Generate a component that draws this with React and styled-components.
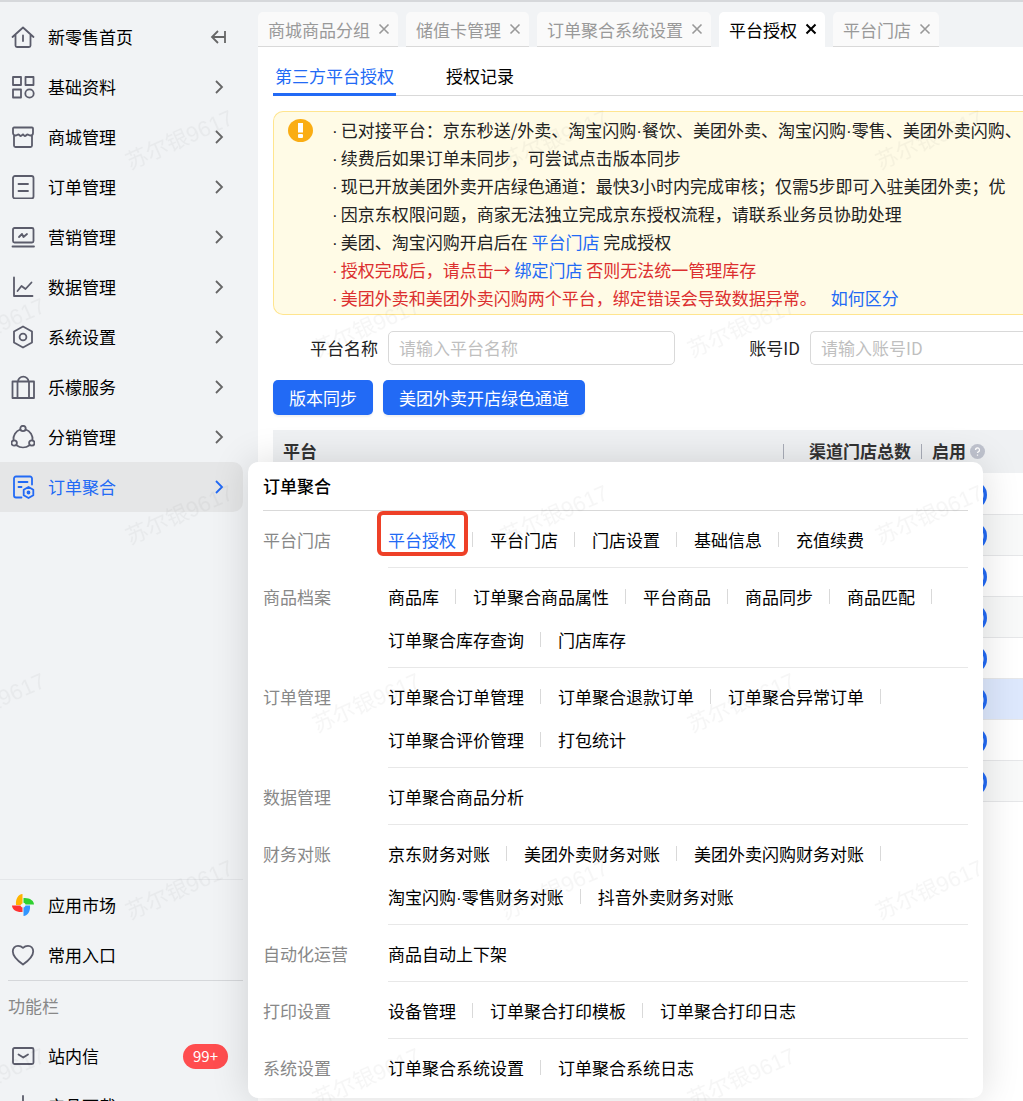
import React, { useState } from "react";
import styled, { createGlobalStyle, css } from "styled-components";

const GlobalStyle = createGlobalStyle`
  * {
    box-sizing: border-box;
  }
  body {
    margin: 0;
    background: #fff;
    font-family: "Noto Sans CJK SC", "Noto Sans", sans-serif;
    font-size: 17px;
    color: #222;
  }
  button, input {
    font: inherit;
  }
  a {
    text-decoration: none;
  }
`;

const Page = styled.div`
  position: relative;
  display: flex;
  height: 100vh;
  min-height: 700px;
  overflow: hidden;
  background: #f1f3f5;
  border-top: 2px solid #d6d8db;
`;

const Sidebar = styled.aside`
  flex: 0 0 243px;
  display: flex;
  flex-direction: column;
  margin-right: 15px;
`;
const MenuList = styled.nav`
  flex: 1;
  min-height: 0;
  overflow: hidden;
  padding-top: 10px;
`;
const MenuFooter = styled.nav`
  flex: 0 0 222px;
  overflow: hidden;
  border-top: 1px solid #e4e6e9;
`;
const MenuItem = styled.a`
  display: flex;
  align-items: center;
  height: 50px;
  padding: 0 15px 0 11px;
  border-radius: 0 10px 10px 0;
  color: ${(props) => (props.$active ? "#226af5" : "#000")};
  background: ${(props) => (props.$active ? "#e5e6e7" : "transparent")};
`;
const MenuIcon = styled.svg`
  width: 24px;
  height: 24px;
  margin-right: 13px;
  fill: none;
  stroke: ${(props) => (props.$active ? "#226af5" : "#5b5c6b")};
  stroke-width: 1.8;
  stroke-linecap: round;
  stroke-linejoin: round;
`;
const MenuText = styled.span`
  flex: 1;
  padding-bottom: 2px;
`;
const ArrowIcon = styled.svg`
  width: 18px;
  height: 18px;
  fill: none;
  stroke: ${(props) => (props.$active ? "#226af5" : "#666")};
  stroke-width: 1.8;
`;
const FooterLine = styled.div`
  height: 1px;
  margin-left: 8px;
  background: #d5d7da;
`;
const FooterTitle = styled.div`
  height: 50px;
  padding-left: 8px;
  line-height: 50px;
  color: #888;
`;
const Count = styled.span`
  height: 25px;
  padding: 0 10px;
  border-radius: 13px;
  background: #ff4d4f;
  color: #fff;
  font-size: 15px;
  line-height: 24px;
`;

const Main = styled.main`
  flex: 1;
  min-width: 0;
  display: flex;
  flex-direction: column;
`;
const TabBar = styled.div`
  display: flex;
  gap: 8px;
  padding-top: 10px;
`;
const Tab = styled.div`
  display: flex;
  align-items: center;
  gap: 8px;
  height: 35px;
  padding: 0 8px 0 10px;
  border-radius: 5px 5px 0 0;
  white-space: nowrap;
  background: #fafafa;
  border-bottom: 1px solid #d9d9d9;
  color: #999;
  ${(props) =>
    props.$active &&
    css`
      background: #fff;
      border-bottom-color: #fff;
      color: #000;
    `}
`;
const CloseButton = styled.button`
  display: flex;
  padding: 0;
  border: none;
  background: none;
  color: inherit;
  cursor: pointer;
  svg {
    width: 12px;
    height: 12px;
    fill: none;
    stroke: currentColor;
    stroke-width: ${(props) => (props.$active ? 2 : 1.6)};
  }
`;
const Content = styled.section`
  flex: 1;
  min-height: 0;
  padding-left: 15px;
  overflow: hidden;
  background: #fff;
`;
const SubTabs = styled.div`
  display: flex;
  gap: 48px;
  height: 49px;
  border-bottom: 1px solid #d9d9d9;
`;
const SubTab = styled.button`
  height: 49px;
  padding: 10px 2px 0;
  border: none;
  border-bottom: 3px solid ${(props) => (props.$active ? "#226af5" : "transparent")};
  background: none;
  color: ${(props) => (props.$active ? "#226af5" : "#000")};
  cursor: pointer;
`;

const Dot = styled.span`
  font-family: "Liberation Sans", sans-serif;
`;
const Notice = styled.div`
  display: flex;
  margin-top: 15px;
  padding: 4px 0 2px 14px;
  border: 1px solid #ffe58f;
  border-right: none;
  border-radius: 10px 0 0 10px;
  background: #fffbe6;
  overflow: hidden;
`;
const NoticeIcon = styled.svg`
  flex: none;
  width: 25px;
  height: 25px;
  margin: 2px 19px 0 0;
`;
const NoticeList = styled.ul`
  margin: 0;
  padding: 0;
  list-style: none;
`;
const NoticeLine = styled.li`
  height: 28px;
  line-height: 28px;
  white-space: nowrap;
  color: ${(props) => (props.$danger ? "#dc2f2f" : "#222")};
  &::before {
    content: "·";
    margin-right: 3px;
    font-family: "Liberation Sans", sans-serif;
  }
`;
const Link = styled.a`
  color: #226af5;
`;
const SpacedLink = styled(Link)`
  margin-left: 14px;
`;

const SearchForm = styled.form`
  display: flex;
  align-items: center;
  gap: 10px;
  margin-top: 16px;
`;
const Label = styled.label`
  width: ${(props) => props.$width}px;
  padding-bottom: 2px;
  text-align: right;
  white-space: nowrap;
`;
const TextInput = styled.input`
  width: 287px;
  height: 34px;
  padding: 0 10px 2px;
  border: 1px solid #d9d9d9;
  border-radius: 5px;
  background: #fff;
  &::placeholder {
    color: #bfbfbf;
  }
`;
const WideInput = styled(TextInput)`
  flex: 1;
  min-width: 0;
  border-right: none;
  border-radius: 5px 0 0 5px;
`;
const ButtonRow = styled.div`
  display: flex;
  gap: 10px;
  margin-top: 15px;
`;
const PrimaryButton = styled.button`
  height: 35px;
  padding: 0 16px;
  border: none;
  border-radius: 5px;
  background: #226af5;
  box-shadow: 0 2px 2px rgba(0, 0, 0, 0.06);
  color: #fff;
  cursor: pointer;
`;

const Table = styled.table`
  width: 100%;
  margin-top: 15px;
  border-collapse: collapse;
  table-layout: fixed;
`;
const HeadCell = styled.th`
  width: ${(props) => props.$width || "auto"};
  height: 43px;
  padding: 0 10px 2px;
  background: #eff1f3;
  color: #333;
  font-weight: 700;
  text-align: left;
  white-space: nowrap;
`;
const HeadInner = styled.div`
  display: flex;
  align-items: center;
  justify-content: ${(props) => (props.$end ? "flex-end" : "flex-start")};
  gap: 4px;
`;
const SplitHeadCell = styled(HeadCell)`
  padding-left: 11px;
  background: linear-gradient(#a9adb8, #a9adb8) 0 50% / 1px 15px no-repeat #eff1f3;
`;
const HelpIcon = styled.svg`
  width: 15px;
  height: 15px;
  margin-top: 2px;
`;
const Row = styled.tr`
  height: 41px;
  background: ${(props) => props.$color};
  td {
    padding: 3px 10px 0 11px;
    border-bottom: 1px solid #e6e7e9;
  }
`;
const Switch = styled.input`
  appearance: none;
  display: block;
  width: 55px;
  height: 28px;
  margin: 0;
  border-radius: 14px;
  background: radial-gradient(circle at 41px 14px, #fff 10px, #226af5 11px);
`;

const Popup = styled.div`
  position: absolute;
  top: 460px;
  left: 248px;
  right: 40px;
  padding: 0 15px 3px;
  border-radius: 10px;
  background: #fff;
  box-shadow: 0 0 38px rgba(0, 0, 0, 0.14);
`;
const PopupTitle = styled.h2`
  height: 49px;
  margin: 0;
  border-bottom: 1px solid #d9d9d9;
  color: #000;
  font-size: 17px;
  font-weight: 500;
  line-height: 48px;
`;
const Group = styled.div`
  display: grid;
  grid-template-columns: 125px 1fr;
`;
const GroupName = styled.div`
  padding-top: 16px;
  line-height: 26px;
  color: #888;
`;
const GroupLinks = styled.div`
  display: flex;
  flex-wrap: wrap;
  row-gap: 17px;
  padding: 15px 0;
  border-bottom: 1px solid #e8e8e8;
  ${Group}:last-child & {
    border-bottom: none;
  }
`;
const GroupLink = styled.a`
  position: relative;
  display: flex;
  align-items: center;
  height: 26px;
  color: ${(props) => (props.$current ? "#226af5" : "#000")};
  &:not(:last-child)::after {
    content: "";
    width: 1px;
    height: 15px;
    margin: 0 17px 0 16px;
    background: #d9d9d9;
  }
  ${(props) =>
    props.$current &&
    css`
      &::before {
        content: "";
        position: absolute;
        inset: -15px 22px -4px -11px;
        border: 4px solid #ee4027;
        border-radius: 6px;
      }
    `}
`;

const Watermark = styled.svg`
  position: absolute;
  inset: 0;
  width: 100%;
  height: 100%;
  pointer-events: none;
  text {
    font-family: "Liberation Sans", "Noto Sans CJK SC", sans-serif;
    font-size: 22px;
    fill: rgba(0, 0, 0, 0.035);
  }
`;

const icons = {
  home: (
    <path d="M1.5 12 12 2.5 22.5 12M4.5 10v10.500a1.500 1.500 0 0 0 1.500 1.500h12a1.500 1.500 0 0 0 1.500-1.500V10M12 10.500v5.500" />
  ),
  base: (
    <>
      <rect x="2" y="2" width="8" height="8" />
      <rect x="14.5" y="2" width="8" height="8" />
      <rect x="2" y="14.5" width="8" height="8" />
      <circle cx="18.5" cy="18.5" r="4.2" />
    </>
  ),
  shop: (
    <path d="M3 2.500h18a1 1 0 0 1 1 1V8c0 1.300-1 2.500-2.500 2.500-1.300 0-2-1-3-1s-1.500 1.500-2.500 1.500-1.200-1.500-2-1.500-1.200 1.500-2.200 1.500-1.500-1.500-2.500-1.500-1.500 1-2.800 1C3 10.500 2 9.300 2 8V3.500a1 1 0 0 1 1-1zM3 10.500v10a1.500 1.500 0 0 0 1.500 1.500h15a1.500 1.500 0 0 0 1.500-1.500v-10" />
  ),
  order: (
    <>
      <rect x="2" y="1" width="20.5" height="22.5" rx="2" />
      <path d="M7.500 9h9.500M7.500 16h9.500" />
    </>
  ),
  promo: (
    <>
      <rect x="2" y="3" width="20.5" height="14.5" rx="1.500" />
      <path d="M1.500 21.500h21.500M8 12l3-3 1.500 3 3.500-3" />
    </>
  ),
  data: <path d="M3 2.500v18.500h18.500M6.500 16l4-5 4 3 6-6.500" />,
  setting: (
    <>
      <path d="M12 1.500 21 6.500v11l-9 5-9-5v-11z" />
      <circle cx="12" cy="12" r="3.4" />
    </>
  ),
  service: <path d="M1.500 6.500h21.500V23H1.500zM6.500 6.500V23M18 6.500V23M7 6.500a5.200 4.800 0 0 1 10.500 0" />,
  share: (
    <>
      <circle cx="12" cy="3.5" r="2.7" />
      <circle cx="3.2" cy="18" r="2.7" />
      <circle cx="20.8" cy="18" r="2.7" />
      <path d="M9.300 4.500A10 10 0 0 0 2.500 15.300M14.700 4.500a10 10 0 0 1 6.800 10.800M5.500 20.300a11 11 0 0 0 13 0" />
    </>
  ),
  aggregate: (
    <>
      <path d="M21 9.500V3.500a2 2 0 0 0-2-2H5a2 2 0 0 0-2 2v17a2 2 0 0 0 2 2h5.500M7.500 7h9M7.500 12h3" />
      <path d="m17.500 12 4.800 2.800v5.400l-4.800 2.800-4.800-2.800v-5.400z" />
      <circle cx="17.5" cy="17.5" r="1" />
    </>
  ),
  market: (
    <g stroke="none">
      <path fill="#ffb400" d="M11.500 1v9.500c-1 .3-1.500 1-1.700 1.500H5C4.500 6 7 1.500 11.500 1z" />
      <path fill="#2fd12f" d="M12.500 5c6-.5 10.500 2.500 10.500 6.500h-8.500c-.3-1-1-1.500-2-1.700z" />
      <path fill="#ff3232" d="M1 12.500h8.500c.3 1 1 1.700 2 2V19C5.500 19.500 1 16.500 1 12.500z" />
      <path fill="#3396ff" d="M12.500 23v-8.500c1-.3 1.700-1 2-2H19c.5 6-2 10-6.500 10.500z" />
    </g>
  ),
  heart: (
    <path d="M12 21.500C7 18 1.800 14 1.800 8.500 1.800 5 4 2.800 7 2.800c2.200 0 4 1 5 2 1-1 2.800-2 5-2 3 0 5.200 2.200 5.200 5.700 0 5.500-5.200 9.500-10.200 13z" />
  ),
  mail: (
    <>
      <rect x="2" y="4" width="20.5" height="16" rx="1.500" />
      <path d="m7.500 10.500 4.800 3 4.700-3" />
    </>
  ),
  download: <path d="M12 2v14M6 11l6 6 6-6M2 21h20" />,
};

const menus = [
  { icon: "home", name: "新零售首页", home: true },
  { icon: "base", name: "基础资料" },
  { icon: "shop", name: "商城管理" },
  { icon: "order", name: "订单管理" },
  { icon: "promo", name: "营销管理" },
  { icon: "data", name: "数据管理" },
  { icon: "setting", name: "系统设置" },
  { icon: "service", name: "乐檬服务" },
  { icon: "share", name: "分销管理" },
  { icon: "aggregate", name: "订单聚合", active: true },
];

const tabs = ["商城商品分组", "储值卡管理", "订单聚合系统设置", "平台授权", "平台门店"];

const groups = [
  { name: "平台门店", links: ["平台授权", "平台门店", "门店设置", "基础信息", "充值续费"] },
  {
    name: "商品档案",
    links: ["商品库", "订单聚合商品属性", "平台商品", "商品同步", "商品匹配", "订单聚合库存查询", "门店库存"],
  },
  {
    name: "订单管理",
    links: ["订单聚合订单管理", "订单聚合退款订单", "订单聚合异常订单", "订单聚合评价管理", "打包统计"],
  },
  { name: "数据管理", links: ["订单聚合商品分析"] },
  {
    name: "财务对账",
    links: ["京东财务对账", "美团外卖财务对账", "美团外卖闪购财务对账", "淘宝闪购·零售财务对账", "抖音外卖财务对账"],
  },
  { name: "自动化运营", links: ["商品自动上下架"] },
  { name: "打印设置", links: ["设备管理", "订单聚合打印模板", "订单聚合打印日志"] },
  { name: "系统设置", links: ["订单聚合系统设置", "订单聚合系统日志"] },
];

const rowColors = ["#fff", "#f8f9f9", "#fff", "#f8f9f9", "#fff", "#dde8fd", "#fff", "#f8f9f9"];

// the CJK font draws "·" full width, so it gets a narrow one
function DotText({ text }) {
  return text.split("·").map((part, index) => (
    <React.Fragment key={index}>
      {index > 0 && <Dot>·</Dot>}
      {part}
    </React.Fragment>
  ));
}

function Menu({ icon, name, active, home, plain, count }) {
  return (
    <MenuItem href="#" $active={active}>
      <MenuIcon viewBox="0 0 24 24" $active={active}>
        {icons[icon]}
      </MenuIcon>
      <MenuText>{name}</MenuText>
      {count && <Count>{count}</Count>}
      {home && (
        <ArrowIcon viewBox="0 0 18 18">
          <path d="M8 3 2 9l6 6M2 9h13M15 3v12" />
        </ArrowIcon>
      )}
      {!home && !plain && (
        <ArrowIcon viewBox="0 0 18 18" $active={active}>
          <path d="m6 3 6 6-6 6" />
        </ArrowIcon>
      )}
    </MenuItem>
  );
}

function App() {
  const [current, setCurrent] = useState("平台授权");
  const [subTab, setSubTab] = useState(0);

  return (
    <>
      <GlobalStyle />
      <Page>
        <Sidebar>
          <MenuList>
            {menus.map((menu) => (
              <Menu key={menu.name} {...menu} />
            ))}
          </MenuList>
          <MenuFooter>
            <Menu icon="market" name="应用市场" plain />
            <Menu icon="heart" name="常用入口" plain />
            <FooterLine />
            <FooterTitle>功能栏</FooterTitle>
            <Menu icon="mail" name="站内信" count="99+" plain />
            <Menu icon="download" name="产品下载" plain />
          </MenuFooter>
        </Sidebar>

        <Main>
          <TabBar>
            {tabs.map((tab) => (
              <Tab key={tab} $active={tab === current} onClick={() => setCurrent(tab)}>
                {tab}
                <CloseButton type="button" aria-label="关闭" $active={tab === current}>
                  <svg viewBox="0 0 12 12">
                    <path d="m1.500 1.500 9 9M10.500 1.500l-9 9" />
                  </svg>
                </CloseButton>
              </Tab>
            ))}
          </TabBar>
          <Content>
            <SubTabs>
              <SubTab type="button" $active={subTab === 0} onClick={() => setSubTab(0)}>
                第三方平台授权
              </SubTab>
              <SubTab type="button" $active={subTab === 1} onClick={() => setSubTab(1)}>
                授权记录
              </SubTab>
            </SubTabs>

            <Notice>
              <NoticeIcon viewBox="0 0 25 25">
                <ellipse cx="12.5" cy="12.5" rx="12.5" ry="11.5" fill="#faad14" />
                <path d="M10 5h5v9.500h-5z" fill="#fff" />
                <rect x="10" y="16" width="5" height="4" rx="1" fill="#fff" />
              </NoticeIcon>
              <NoticeList>
                <NoticeLine>
                  <DotText text="已对接平台：京东秒送/外卖、淘宝闪购·餐饮、美团外卖、淘宝闪购·零售、美团外卖闪购、" />
                </NoticeLine>
                <NoticeLine>续费后如果订单未同步，可尝试点击版本同步</NoticeLine>
                <NoticeLine>
                  现已开放美团外卖开店绿色通道：最快3小时内完成审核；仅需5步即可入驻美团外卖；优
                </NoticeLine>
                <NoticeLine>因京东权限问题，商家无法独立完成京东授权流程，请联系业务员协助处理</NoticeLine>
                <NoticeLine>
                  美团、淘宝闪购开启后在 <Link href="#">平台门店</Link> 完成授权
                </NoticeLine>
                <NoticeLine $danger>
                  授权完成后，请点击→ <Link href="#">绑定门店</Link> 否则无法统一管理库存
                </NoticeLine>
                <NoticeLine $danger>
                  美团外卖和美团外卖闪购两个平台，绑定错误会导致数据异常。
                  <SpacedLink href="#">如何区分</SpacedLink>
                </NoticeLine>
              </NoticeList>
            </Notice>

            <SearchForm>
              <Label htmlFor="platform" $width={105}>
                平台名称
              </Label>
              <TextInput id="platform" placeholder="请输入平台名称" />
              <Label htmlFor="account" $width={115}>
                账号ID
              </Label>
              <WideInput id="account" placeholder="请输入账号ID" />
            </SearchForm>
            <ButtonRow>
              <PrimaryButton type="button">版本同步</PrimaryButton>
              <PrimaryButton type="button">美团外卖开店绿色通道</PrimaryButton>
            </ButtonRow>

            <Table>
              <thead>
                <tr>
                  <HeadCell>平台</HeadCell>
                  <SplitHeadCell $width="138px">
                    <HeadInner $end>渠道门店总数</HeadInner>
                  </SplitHeadCell>
                  <SplitHeadCell $width="102px">
                    <HeadInner>
                      启用
                      <HelpIcon viewBox="0 0 15 15">
                        <circle cx="7.5" cy="7.5" r="7.5" fill="#bfc3ce" />
                        <path
                          d="M5.500 6a2 2 0 1 1 2.800 1.800c-.6.3-.8.600-.8 1.200M7.500 10.500v1.200"
                          fill="none"
                          stroke="#fff"
                          strokeWidth="1.3"
                        />
                      </HelpIcon>
                    </HeadInner>
                  </SplitHeadCell>
                </tr>
              </thead>
              <tbody>
                {rowColors.map((color, index) => (
                  <Row key={index} $color={color}>
                    <td />
                    <td />
                    <td>
                      <Switch type="checkbox" aria-label="启用" defaultChecked />
                    </td>
                  </Row>
                ))}
              </tbody>
            </Table>
          </Content>
        </Main>

        <Popup>
          <PopupTitle>订单聚合</PopupTitle>
          {groups.map((group) => (
            <Group key={group.name}>
              <GroupName>{group.name}</GroupName>
              <GroupLinks>
                {group.links.map((link) => (
                  <GroupLink key={link} href="#" $current={link === "平台授权"}>
                    <span>
                      <DotText text={link} />
                    </span>
                  </GroupLink>
                ))}
              </GroupLinks>
            </Group>
          ))}
        </Popup>

        <Watermark>
          <defs>
            <pattern id="mark" width="375" height="375" patternUnits="userSpaceOnUse">
              <text transform="translate(130 168) rotate(-24)">苏尔银9617</text>
              <text transform="translate(317 356) rotate(-24)">苏尔银9617</text>
              <text transform="translate(-58 356) rotate(-24)">苏尔银9617</text>
            </pattern>
          </defs>
          <rect width="100%" height="100%" fill="url(#mark)" />
        </Watermark>
      </Page>
    </>
  );
}

export default App;
